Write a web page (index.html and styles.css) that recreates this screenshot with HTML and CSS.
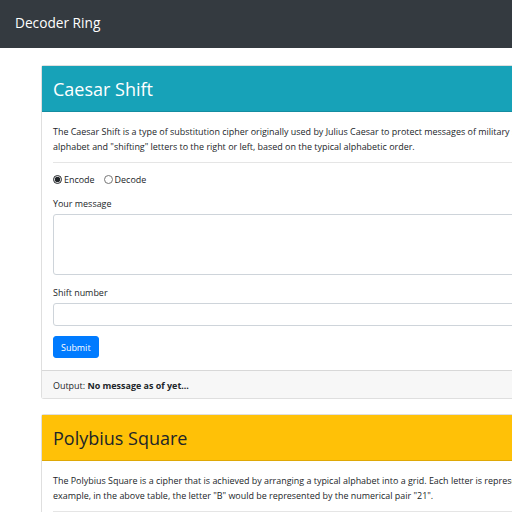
FILE: index.html
```html
<!DOCTYPE html>
<html>
<head>
<meta charset="utf-8">
<title>Decoder Ring</title>
<link rel="stylesheet" href="styles.css">
</head>
<body>
<nav class="navbar">
  <span class="brand">Decoder Ring</span>
</nav>
<main class="container">
  <section class="card">
    <div class="card-header header-info">
      <h2 class="card-title">Caesar Shift</h2>
    </div>
    <div class="card-body">
      <p class="desc">The Caesar Shift is a type of substitution cipher originally used by Julius Caesar to protect messages of military significance. It involves taking the<br>alphabet and "shifting" letters to the right or left, based on the typical alphabetic order.</p>
      <hr class="divider">
      <form class="form">
        <div class="radios">
          <label class="radio"><input type="radio" name="mode" checked> Encode</label>
          <label class="radio"><input type="radio" name="mode"> Decode</label>
        </div>
        <div class="group">
          <label class="label">Your message</label>
          <textarea class="control textarea"></textarea>
        </div>
        <div class="group">
          <label class="label">Shift number</label>
          <input class="control input" type="number">
        </div>
        <button type="button" class="btn">Submit</button>
      </form>
    </div>
    <div class="card-footer">Output: <strong>No message as of yet...</strong></div>
  </section>
  <section class="card">
    <div class="card-header header-warning">
      <h2 class="card-title">Polybius Square</h2>
    </div>
    <div class="card-body">
      <p class="desc">The Polybius Square is a cipher that is achieved by arranging a typical alphabet into a grid. Each letter is represented through a coordinate. For<br>example, in the above table, the letter "B" would be represented by the numerical pair "21".</p>
      <hr class="divider">
    </div>
  </section>
</main>
</body>
</html>
```
FILE: styles.css
```css
html, body {
  margin: 0;
  padding: 0;
  overflow: hidden;
}
body {
  font-family: "Open Sans", "Noto Sans", sans-serif;
  font-size: 8.95px;
  line-height: 15px;
  color: #212529;
  background: #fff;
}
.navbar {
  height: 48px;
  background: #343a40;
  display: flex;
  align-items: center;
  padding-left: 15px;
}
.brand {
  color: #fff;
  font-size: 13.7px;
  line-height: 20px;
  margin-top: -2px;
}
.container {
  padding: 17px 0 0 41px;
}
.card {
  width: 700px;
  border: 1px solid rgba(0,0,0,.125);
  border-radius: 3px;
  margin-bottom: 15px;
  background: #fff;
}
.card-header {
  height: 45px;
  display: flex;
  align-items: center;
  padding: 0 11px;
  border-bottom: 1px solid rgba(0,0,0,.125);
}
.header-info {
  background: #17a2b8;
  color: #fff;
}
.header-warning {
  background: #ffc107;
  color: #212529;
}
.card-title {
  margin: 0;
  font-weight: 400;
  font-size: 18px;
  line-height: 24px;
}
.card-body {
  padding: 12px 11px;
}
.desc {
  margin: 0 0 8px;
  white-space: nowrap;
}
.divider {
  border: 0;
  border-top: 1px solid rgba(0,0,0,.1);
  margin: 0 0 8px;
}
.form {
  margin: 0;
}
.radios {
  display: flex;
  gap: 9px;
  height: 16px;
  align-items: center;
  margin-bottom: 9px;
}
.radio {
  display: flex;
  align-items: center;
  gap: 2px;
}
.radio input {
  margin: 0;
  width: 9px;
  height: 9px;
  accent-color: #212529;
}
.group {
  margin-bottom: 10px;
}
.label {
  display: block;
  margin-bottom: 3px;
}
.control {
  display: block;
  box-sizing: border-box;
  width: 100%;
  border: 1px solid #ced4da;
  border-radius: 3px;
  background: #fff;
  font: inherit;
  margin: 0;
}
.textarea {
  height: 61px;
  resize: none;
}
.input {
  height: 23px;
}
.btn {
  display: block;
  background: #007bff;
  color: #fff;
  border: 1px solid #007bff;
  border-radius: 3px;
  font: inherit;
  height: 22px;
  padding: 0 7px;
}
.card-footer {
  background: #f7f7f7;
  border-top: 1px solid rgba(0,0,0,.125);
  padding: 7px 11px 5px;
}
.card-footer strong {
  font-weight: 700;
}
```
